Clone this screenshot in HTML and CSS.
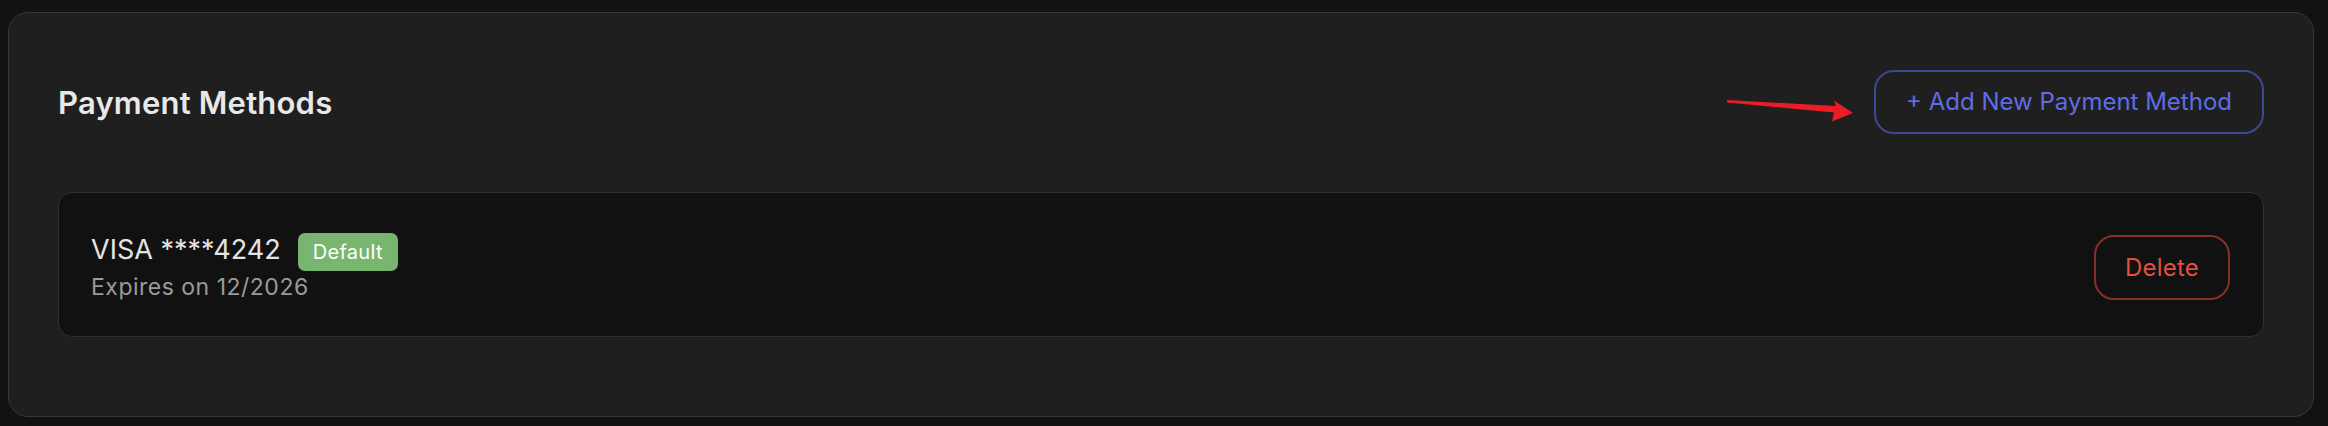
FILE: index.html
```html
<!DOCTYPE html>
<html lang="en">
<head>
<meta charset="utf-8">
<title>Payment Methods</title>
<link rel="stylesheet" href="styles.css">
</head>
<body>
<section class="card">
  <header class="card-header">
    <h2 class="title">Payment Methods</h2>
    <div class="add-wrap">
      <svg class="arrow" width="140" height="35" viewBox="0 0 140 35" aria-hidden="true">
        <polygon points="11,6 120,12 118,6.5 137,19 116,27.5 118,18.5 11,8.5" fill="#ec1c27"/>
      </svg>
      <button class="btn btn-add">+ Add New Payment Method</button>
    </div>
  </header>
  <div class="method">
    <div class="method-info">
      <div class="method-top">
        <span class="method-name">VISA ****4242</span>
        <span class="badge">Default</span>
      </div>
      <div class="method-exp">Expires on 12/2026</div>
    </div>
    <button class="btn btn-delete">Delete</button>
  </div>
</section>
</body>
</html>
```

FILE: styles.css
```css
html, body {
  margin: 0;
  padding: 0;
  background: #121212;
  font-family: Inter, "Noto Sans", "Liberation Sans", sans-serif;
}

.card {
  margin: 12px 14px 0 8px;
  height: 405px;
  box-sizing: border-box;
  background: #1f1f1f;
  border: 1.5px solid #383838;
  border-radius: 20px;
  padding: 57px 49px 0 49px;
}

.card-header {
  display: flex;
  align-items: center;
  justify-content: space-between;
  height: 64px;
}

.title {
  margin: 0;
  padding-top: 2px;
  font-size: 31px;
  line-height: 40px;
  font-weight: 600;
  color: #e8e8e8;
  letter-spacing: 0.2px;
}

.add-wrap {
  position: relative;
}

.arrow {
  position: absolute;
  right: calc(100% + 18px);
  top: 24px;
}

.btn {
  font-family: inherit;
  font-size: 24px;
  line-height: 36px;
  background: transparent;
  border-radius: 20px;
  cursor: pointer;
}

.btn-add {
  display: block;
  height: 64px;
  padding: 0 30px;
  border: 2px solid #3f4696;
  color: #5d6de6;
}

.method {
  margin-top: 58px;
  display: flex;
  align-items: center;
  justify-content: space-between;
  background: #111111;
  border: 1.5px solid #303030;
  border-radius: 14px;
  padding: 38px 33px 32px 32px;
}

.method-top {
  display: flex;
  align-items: baseline;
  gap: 17px;
}

.method-name {
  font-size: 27px;
  line-height: 38px;
  color: #e4e4e4;
}

.badge {
  background: #78b56f;
  color: #ffffff;
  font-size: 20px;
  line-height: 30px;
  padding: 4px 15px;
  border-radius: 7px;
  letter-spacing: 0.3px;
}

.method-exp {
  font-size: 23px;
  line-height: 33px;
  color: #9a9a9a;
  letter-spacing: 0.5px;
}

.btn-delete {
  height: 65px;
  padding: 0 29px;
  border: 2px solid #863127;
  color: #e0503f;
  letter-spacing: 0.2px;
}
```
